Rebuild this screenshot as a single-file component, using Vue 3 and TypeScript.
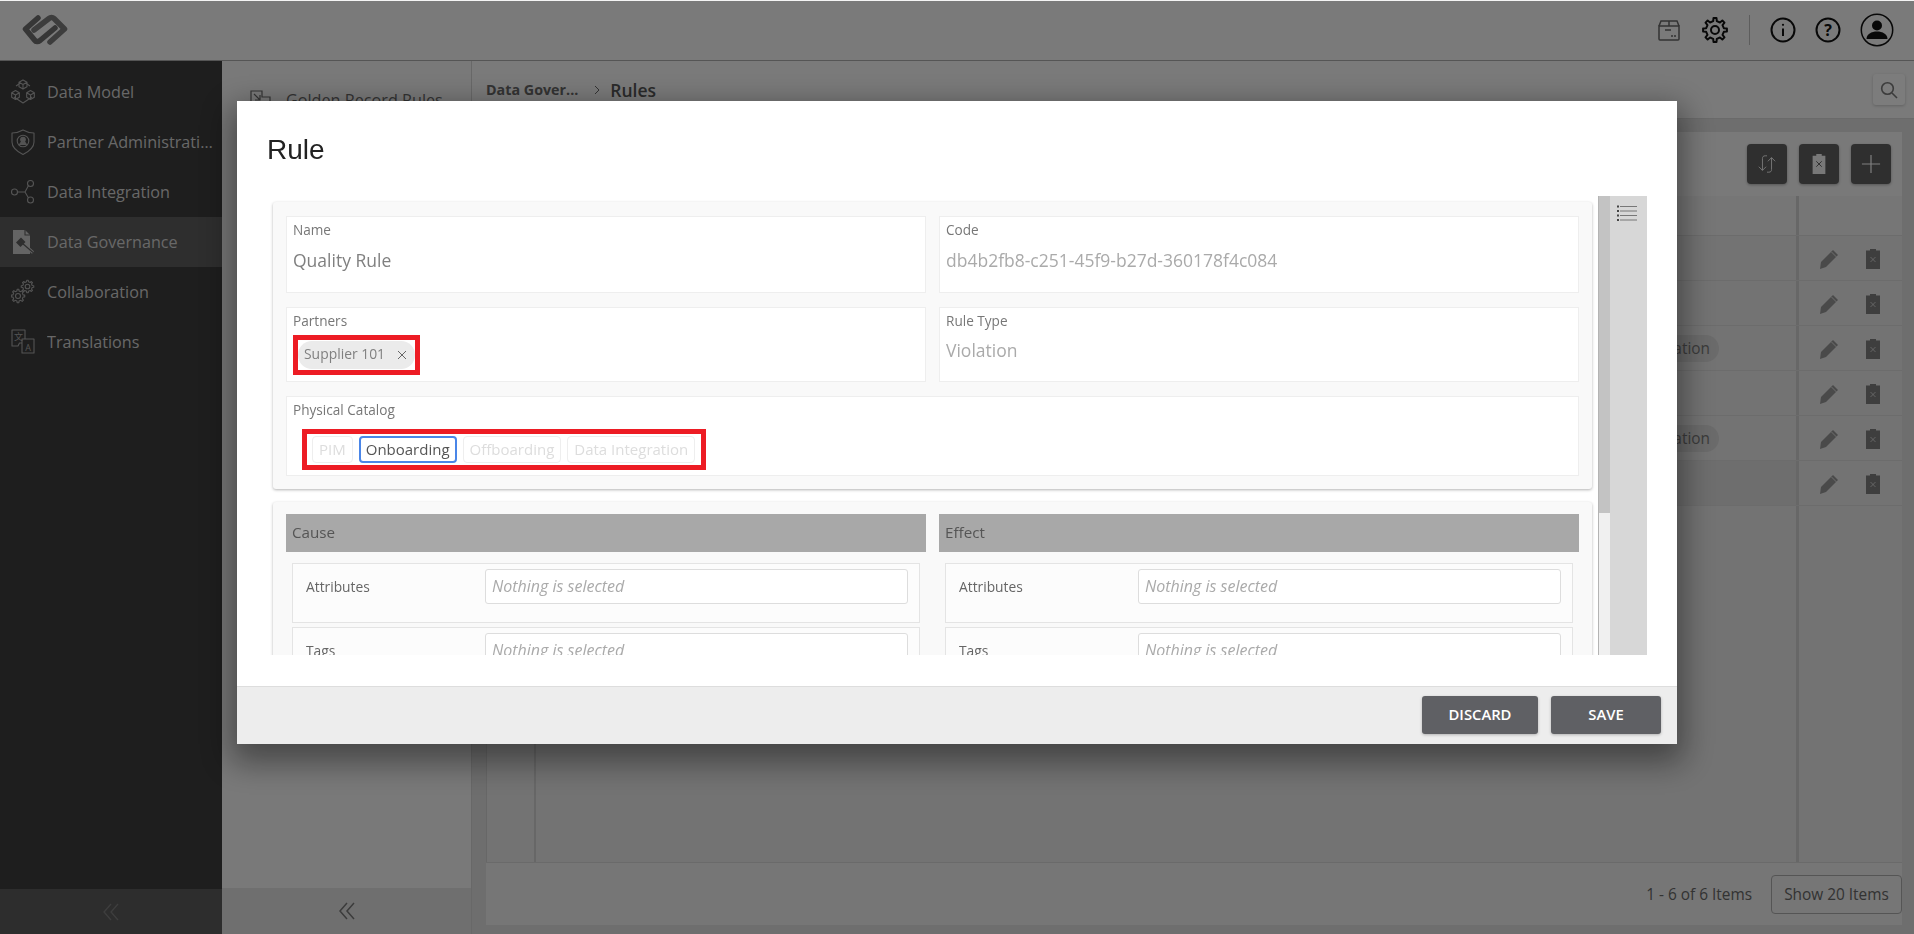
<template>
  <div class="page">
    <header class="topbar">
      <svg class="logo" viewBox="0 0 46 32" fill="none" stroke="#6c6c6c" stroke-width="5.500" stroke-linecap="round" stroke-linejoin="round">
        <path d="M16 4 3.500 15l9 11c1.500 2 3.500 2 5.500.500L33 14" />
        <path d="M12 16 27 4.500c1.500-1.500 3.500-1.500 5 0L42.500 15 28 28" stroke="#7a7a7a" />
      </svg>
      <div class="top-actions">
        <svg class="ic-box" viewBox="0 0 22 22" fill="none" stroke="#666" stroke-width="1.500">
          <path d="M1 7h20v13a1 1 0 0 1-1 1H2a1 1 0 0 1-1-1z" />
          <path d="M1 7l2-5h16l2 5M11 2v5M7 11h6M14 16v2M17 16v2" />
        </svg>
        <svg class="ic-gear" viewBox="0 0 26 26" fill="none" stroke="#111" stroke-width="2">
          <path :d="gearPath(13, 13, 12, 9, 8)" stroke-linejoin="round" />
          <circle cx="13" cy="13" r="4" />
        </svg>
        <span class="top-sep"></span>
        <svg class="ic-round" viewBox="0 0 26 26" fill="none" stroke="#111" stroke-width="2">
          <circle cx="13" cy="13" r="11.500" />
          <path d="M13 11.500V19" />
          <circle cx="13" cy="7.800" r="1.100" fill="#111" stroke="none" />
        </svg>
        <svg class="ic-round" viewBox="0 0 26 26" fill="none" stroke="#111" stroke-width="2">
          <circle cx="13" cy="13" r="11.500" />
          <text x="13" y="18.500" text-anchor="middle" class="q-mark">?</text>
        </svg>
        <svg class="ic-user" viewBox="0 0 34 34" fill="none">
          <circle cx="17" cy="17" r="15.700" stroke="#111" stroke-width="1.500" />
          <circle cx="17" cy="12.500" r="5" fill="#111" />
          <path d="M6.500 26c0-5 5-7.500 10.500-7.500S27.500 21 27.500 26z" fill="#111" />
        </svg>
      </div>
    </header>

    <div class="main">
      <aside class="sidebar">
        <nav class="nav">
          <a v-for="item in navItems" :key="item.label" class="nav-item" :class="{ active: item.active }">
            <svg class="nav-icon" viewBox="0 0 24 26" fill="none" stroke="#a8a8a8" stroke-width="1.100" stroke-linejoin="round">
              <template v-if="item.icon === 'cubes'">
                <path v-for="c in cubes" :key="c" :d="c" />
                <path d="M5 7 8 5M16 5l3 2M3 18l9 6 9-6" />
              </template>
              <template v-else-if="item.icon === 'shield'">
                <path d="M12 1C8.500 3 4.500 4 1 4v9c0 6 6 10 11 12.500C17 23 23 19 23 13V4c-3.500 0-7.500-1-11-3z" />
                <circle cx="12" cy="12" r="5.800" />
                <circle cx="12" cy="10.500" r="2.300" fill="#a8a8a8" />
                <path d="M8.500 16c.5-2 2-3 3.500-3s3 1 3.500 3" fill="#a8a8a8" />
              </template>
              <template v-else-if="item.icon === 'nodes'">
                <circle cx="3.500" cy="13" r="3" />
                <circle cx="19.500" cy="4.500" r="3" />
                <circle cx="19.500" cy="21" r="3" />
                <path d="M6.500 13H14l3.500-6.500M14 13l3.500 6" />
              </template>
              <template v-else-if="item.icon === 'gavel'">
                <path d="M2 1h12l5 5v19H2z" fill="#c8c8c8" stroke="none" />
                <path d="M14 1v5h5" stroke="#5c5c5c" />
                <path d="M11 14l11 9.500" stroke="#c8c8c8" stroke-width="3" />
                <path d="M11 14l11 9.500" stroke="#5c5c5c" stroke-width="1.200" />
                <path d="M5 13.500 10 8.500l4.500 4.500-5 5z" fill="#5c5c5c" stroke="none" />
              </template>
              <template v-else-if="item.icon === 'gears'">
                <path :d="gearPath(16.500, 7.500, 6.300, 4.800, 8)" />
                <circle cx="16.500" cy="7.500" r="2.300" />
                <path :d="gearPath(7, 17, 6.800, 5.200, 8)" />
                <circle cx="7" cy="17" r="2.500" />
              </template>
              <template v-else>
                <path d="M1 1h13v13H8.500l-1.500 3H1z" />
                <path d="M11 10h12v14H11z" fill="#3c3c3c" />
                <text x="7.500" y="11" text-anchor="middle" class="glyph-zh">文</text>
                <text x="17" y="21.500" text-anchor="middle" class="glyph-a">A</text>
              </template>
            </svg>
            <span class="nav-label">{{ item.label }}</span>
          </a>
        </nav>
        <div class="collapse dark">
          <svg viewBox="0 0 16 20" fill="none" stroke="#7c7c7c" stroke-width="1.300"><path d="M8 2 1 10l7 8M15 2l-7 8 7 8" /></svg>
        </div>
      </aside>

      <section class="subpanel">
        <div class="sub-list">
          <div class="sub-item">
            <svg viewBox="0 0 22 20" fill="none" stroke="#666" stroke-width="1.200">
              <path d="M1 1h11v6h8v11H1z" />
              <path d="M4 4l6 6M10 5v5H5" />
            </svg>
            <span>Golden Record Rules</span>
          </div>
        </div>
        <div class="collapse">
          <svg viewBox="0 0 16 20" fill="none" stroke="#777" stroke-width="1.500"><path d="M8 2 1 10l7 8M15 2l-7 8 7 8" /></svg>
        </div>
      </section>

      <section class="content">
        <div class="crumbs">
          <span class="crumb">Data Gover...</span>
          <svg class="crumb-sep" viewBox="0 0 8 12" fill="none" stroke="#666" stroke-width="1"><path d="M2 2l4 4-4 4" /></svg>
          <span class="crumb current">Rules</span>
          <button class="search-btn">
            <svg viewBox="0 0 18 18" fill="none" stroke="#777" stroke-width="1.600"><circle cx="7.500" cy="7.500" r="5.800" /><path d="M12 12l5 5" /></svg>
          </button>
        </div>
        <div class="workspace">
          <div class="toolbar">
            <button class="tool-btn">
              <svg viewBox="0 0 22 22" fill="none" stroke="#f4f4f4" stroke-width="1">
                <path d="M11 2H9c-2 0-3 1-3 3v13M2 14l4 4 4-4M11 20h2c2 0 3-1 3-3V4M12 8l4-4 4 4" />
              </svg>
            </button>
            <button class="tool-btn">
              <svg viewBox="0 0 16 22"><path d="M5 0h6v2h4v20H1V2h4z" fill="#f0f0f0" /><path d="M5 8l6 6M11 8l-6 6" stroke="#555" fill="none" /></svg>
            </button>
            <button class="tool-btn">
              <svg viewBox="0 0 22 22" fill="none" stroke="#fff" stroke-width="1.300"><path d="M11 1v20M1 11h20" /></svg>
            </button>
          </div>
          <div class="table">
            <div class="thead">
              <div class="col-check"></div>
              <div class="col-main"></div>
              <div class="col-actions"></div>
            </div>
            <div class="tbody">
              <div v-for="(row, i) in rows" :key="i" class="row" :class="{ selected: row.selected }">
                <div class="col-check"></div>
                <div class="col-main">
                  <span v-if="row.chip" class="row-chip">Translation</span>
                </div>
                <div class="col-actions">
                  <svg class="row-pencil" viewBox="0 0 20 20"><path d="M14 1l5 5L7 18l-6 2 1-7z" fill="#949494" /><path d="M12.500 3l5 5" stroke="#ddd" /></svg>
                  <svg class="row-trash" viewBox="0 0 14 20"><path d="M4 0h6v1.500h4V20H0V1.500h4z" fill="#7c7c7c" /><path d="M4.500 8l5 5M9.500 8l-5 5" stroke="#ddd" fill="none" stroke-width=".8" /></svg>
                </div>
              </div>
              <div class="row-rest">
                <div class="col-check"></div>
                <div class="col-main"></div>
                <div class="col-actions"></div>
              </div>
            </div>
          </div>
          <div class="pager">
            <span class="pager-count">1 - 6 of 6 Items</span>
            <button class="pager-btn">Show 20 Items</button>
          </div>
        </div>
      </section>
    </div>

    <div class="scrim"></div>

    <div class="modal">
      <h2 class="modal-title">Rule</h2>
      <div class="modal-body">
        <div class="form">
          <div class="card top-card">
            <div class="field name-field">
              <label>Name</label>
              <div class="value">Quality Rule</div>
            </div>
            <div class="field name-field">
              <label>Code</label>
              <div class="value muted">db4b2fb8-c251-45f9-b27d-360178f4c084</div>
            </div>
            <div class="field partner-field">
              <label>Partners</label>
              <div class="mark partner-mark">
                <span class="chip">Supplier 101
                  <svg viewBox="0 0 10 10" fill="none" stroke="#666"><path d="M1 1l8 8M9 1l-8 8" /></svg>
                </span>
              </div>
            </div>
            <div class="field partner-field">
              <label>Rule Type</label>
              <div class="value muted type-value">Violation</div>
            </div>
            <div class="field catalog-field">
              <label>Physical Catalog</label>
              <div class="mark catalog-mark">
                <button v-for="c in catalogs" :key="c" class="seg" :class="{ on: c === 'Onboarding' }">{{ c }}</button>
              </div>
            </div>
          </div>
          <div class="card bottom-card">
            <div v-for="side in ['Cause', 'Effect']" :key="side" class="side">
              <div class="side-head">{{ side }}</div>
              <div v-for="f in ['Attributes', 'Tags']" :key="f" class="pick-row">
                <span class="pick-label">{{ f }}</span>
                <div class="pick-input">Nothing is selected</div>
              </div>
            </div>
          </div>
        </div>
        <div class="scrollbar"><div class="thumb"></div></div>
        <div class="outline">
          <svg viewBox="0 0 20 17" fill="none" stroke="#777">
            <path d="M3 1.500h17M3 6h17M3 10.500h17M3 15h17" />
            <path d="M0 1.500h2M0 6h2M0 10.500h2M0 15h2" stroke="#444" stroke-width="2" />
          </svg>
        </div>
      </div>
      <footer class="modal-foot">
        <button class="foot-btn discard">DISCARD</button>
        <button class="foot-btn save">SAVE</button>
      </footer>
    </div>
  </div>
</template>

<script setup lang="ts">
interface NavItem {
  label: string
  icon: string
  active?: boolean
}

const navItems: NavItem[] = [
  { label: 'Data Model', icon: 'cubes' },
  { label: 'Partner Administration', icon: 'shield' },
  { label: 'Data Integration', icon: 'nodes' },
  { label: 'Data Governance', icon: 'gavel', active: true },
  { label: 'Collaboration', icon: 'gears' },
  { label: 'Translations', icon: 'translate' },
]

const rows = [
  { chip: false },
  { chip: false },
  { chip: true },
  { chip: false },
  { chip: true },
  { chip: false, selected: true },
]

const catalogs = ['PIM', 'Onboarding', 'Offboarding', 'Data Integration']

// small isometric cube, drawn around its centre
function cubePath(cx: number, cy: number, r: number) {
  const dx = r * 0.87
  const dy = r * 0.5
  return `M${cx} ${cy - r}L${cx + dx} ${cy - dy}V${cy + dy}L${cx} ${cy + r}L${cx - dx} ${cy + dy}V${cy - dy}Z` +
    `M${cx - dx} ${cy - dy}L${cx} ${cy}L${cx + dx} ${cy - dy}M${cx} ${cy}V${cy + r}`
}

const cubes = [cubePath(12, 5.5, 4.6), cubePath(4.5, 16, 4.4), cubePath(19.5, 16, 4.4)]

function gearPath(cx: number, cy: number, outer: number, inner: number, teeth: number) {
  const step = (Math.PI * 2) / teeth
  const pts: string[] = []
  for (let i = 0; i < teeth; i++) {
    const a = i * step
    const w = step * 0.16
    const corners: [number, number][] = [
      [inner, a - w * 1.6],
      [outer, a - w],
      [outer, a + w],
      [inner, a + w * 1.6],
    ]
    for (const [r, t] of corners) {
      pts.push(`${(cx + Math.sin(t) * r).toFixed(2)} ${(cy - Math.cos(t) * r).toFixed(2)}`)
    }
  }
  return 'M' + pts.join('L') + 'Z'
}
</script>

<style>
html, body { margin: 0; height: 100%; overflow: hidden; }
</style>

<style scoped>
.page {
  height: 100vh;
  display: flex;
  flex-direction: column;
  font-family: "Open Sans", "Noto Sans", sans-serif;
  background: #dcdcdc;
  color: #666;
  overflow: hidden;
}
button { font-family: inherit; }

.topbar {
  height: 61px;
  flex: none;
  box-sizing: border-box;
  display: flex;
  align-items: center;
  justify-content: space-between;
  padding: 0 20px 0 22px;
  background: #f4f4f4;
  border-bottom: 1px solid #aaa;
}
.logo { width: 46px; height: 32px; }
.top-actions { display: flex; align-items: center; }
.ic-box { width: 22px; height: 22px; margin-right: 22px; }
.ic-gear { width: 26px; height: 26px; margin-right: 21px; }
.top-sep { width: 1px; height: 30px; background: #bbb; margin-right: 20px; }
.ic-round { width: 26px; height: 26px; margin-right: 19px; }
.ic-user { width: 34px; height: 34px; }
.q-mark { font: 700 16px "Open Sans", sans-serif; fill: #111; stroke: none; }

.main { flex: 1; display: flex; min-height: 0; }

.sidebar {
  width: 222px;
  flex: none;
  display: flex;
  flex-direction: column;
  background: #3c3c3c;
}
.nav { flex: 1; padding-top: 6px; }
.nav-item {
  height: 50px;
  display: flex;
  align-items: center;
  gap: 12px;
  padding-left: 11px;
  color: #d0d0d0;
  font-size: 16.200px;
}
.nav-item.active { background: #5c5c5c; }
.nav-icon { width: 24px; height: 26px; flex: none; }
.nav-label {
  width: 166px;
  white-space: nowrap;
  overflow: hidden;
  text-overflow: ellipsis;
}
.glyph-zh { font: 9px "Noto Sans CJK SC", sans-serif; fill: #a8a8a8; stroke: none; }
.glyph-a { font: 9px "Open Sans", sans-serif; fill: #a8a8a8; stroke: none; }

.collapse {
  height: 46px;
  flex: none;
  display: flex;
  align-items: center;
  justify-content: center;
  background: #dfdfdf;
}
.collapse.dark { background: #5a5a5a; height: 45px; }
.collapse svg { width: 16px; height: 20px; }

.subpanel {
  width: 250px;
  flex: none;
  display: flex;
  flex-direction: column;
  background: #f2f2f2;
  border-right: 1px solid #d0d0d0;
  box-sizing: border-box;
}
.sub-list { flex: 1; padding: 28px 0 0 28px; }
.sub-item { display: flex; align-items: center; gap: 14px; font-size: 16.200px; color: #666; }
.sub-item svg { width: 22px; height: 20px; }

.content { flex: 1; min-width: 0; display: flex; flex-direction: column; }
.crumbs {
  height: 58px;
  flex: none;
  box-sizing: border-box;
  display: flex;
  align-items: center;
  padding: 0 9px 0 14px;
  background: #f4f4f4;
  border-bottom: 1px solid #d4d4d4;
}
.crumb { font-size: 14.300px; font-weight: 700; color: #666; }
.crumb.current { font-size: 17.500px; font-weight: 600; color: #555; }
.crumb-sep { width: 8px; height: 12px; margin: 0 9px 0 15px; }
.search-btn {
  width: 32px;
  height: 31px;
  margin-left: auto;
  padding: 6px;
  background: #f8f8f8;
  border: none;
  border-radius: 3px;
  box-shadow: 0 1px 3px rgba(0, 0, 0, 0.2);
  display: flex;
}
.search-btn svg { width: 18px; height: 18px; margin: auto; }

.workspace {
  flex: 1;
  min-height: 0;
  display: flex;
  flex-direction: column;
  padding: 13px 12px 9px 14px;
}
.toolbar {
  height: 64px;
  flex: none;
  display: flex;
  justify-content: flex-end;
  gap: 12px;
  padding: 12px 11px 0 0;
  box-sizing: border-box;
  background: #f3f3f3;
}
.tool-btn {
  width: 40px;
  height: 40px;
  padding: 0;
  background: #5e5e5e;
  border: none;
  border-radius: 4px;
  box-shadow: 0 1px 3px rgba(0, 0, 0, 0.3);
  display: flex;
  align-items: center;
  justify-content: center;
}
.tool-btn svg { width: 20px; height: 20px; }

.table { flex: 1; min-height: 0; display: flex; flex-direction: column; background: #e6e6e6; }
.thead { height: 39px; display: flex; flex: none; background: #ececec; }
.tbody { flex: 1; display: flex; flex-direction: column; min-height: 0; }
.row { height: 45px; flex: none; display: flex; box-sizing: border-box; border-top: 1px solid #d8d8d8; }
.row.selected { background: #dcdcdc; }
.row.selected .col-actions { background: #e6e6e6; }
.row-rest { flex: 1; display: flex; border-top: 1px solid #d8d8d8; }
.col-check { width: 50px; flex: none; border-left: 1px solid #cfcfcf; border-right: 2px solid #cfcfcf; box-sizing: border-box; }
.col-main {
  flex: 1;
  display: flex;
  align-items: center;
  justify-content: flex-end;
  padding-right: 77px;
  border-right: 3px solid #cfcfcf;
}
.col-actions {
  width: 103px;
  flex: none;
  box-sizing: border-box;
  display: flex;
  align-items: center;
  gap: 27px;
  padding: 1px 0 0 20px;
}
.row-pencil { width: 20px; height: 20px; }
.row-trash { width: 14px; height: 20px; }
.row-chip {
  height: 27px;
  line-height: 27px;
  padding: 0 9px 0 14px;
  border-radius: 14px;
  background: #d6d6d6;
  color: #777;
  font-size: 15.400px;
}

.pager {
  height: 63px;
  flex: none;
  box-sizing: border-box;
  display: flex;
  align-items: center;
  justify-content: flex-end;
  gap: 19px;
  background: #ececec;
  border-top: 1px solid #d4d4d4;
  font-size: 15.400px;
  color: #666;
}
.pager-btn {
  width: 131px;
  height: 39px;
  padding: 0;
  background: transparent;
  border: 1px solid #aaa;
  border-radius: 4px;
  font-size: 15.400px;
  color: #666;
}

.scrim {
  position: fixed;
  inset: 1px 0 0 0;
  background: rgba(0, 0, 0, 0.5);
}

.modal {
  position: fixed;
  left: 237px;
  top: 101px;
  width: 1440px;
  height: 643px;
  display: flex;
  flex-direction: column;
  background: #fff;
  box-shadow: 0 12px 30px 6px rgba(0, 0, 0, 0.42);
}
.modal-title {
  height: 95px;
  flex: none;
  margin: 0;
  padding: 33px 0 0 30px;
  box-sizing: border-box;
  font: 400 28px "Liberation Sans", Arial, sans-serif;
  color: #222;
}
.modal-body {
  height: 459px;
  flex: none;
  margin: 0 30px;
  display: flex;
  overflow: hidden;
}
.form { flex: 1; min-width: 0; padding: 6px 6px 0 6px; overflow: hidden; }
.card {
  background: #f9f9f9;
  border-radius: 3px;
  box-shadow: 0 1px 3px rgba(0, 0, 0, 0.3);
  box-sizing: border-box;
  display: grid;
  grid-template-columns: 1fr 1fr;
  column-gap: 13px;
}
.top-card { padding: 14px 13px 13px; row-gap: 14px; height: 287px; }
.field {
  background: #fff;
  border: 1px solid #eee;
  padding: 4px 6px;
  box-sizing: border-box;
}
.field label { display: block; font-size: 13.600px; line-height: 18px; color: #777; }
.name-field { height: 77px; }
.partner-field { height: 75px; }
.catalog-field { grid-column: 1 / 3; height: 80px; }
.value { margin-top: 9px; font-size: 17.500px; line-height: 24px; color: #808080; }
.value.muted { color: #aaa; }
.type-value { margin-top: 8px; }
.mark { border: 5px solid #ed1c24; box-sizing: border-box; display: flex; align-items: center; }
.partner-mark { width: 127px; height: 40px; margin: 5px 0 0; }
.chip {
  width: 117px;
  height: 28px;
  box-sizing: border-box;
  padding: 0 8px 3px 6px;
  display: flex;
  align-items: center;
  justify-content: space-between;
  background: #ebebeb;
  border-radius: 14px;
  font-size: 13.900px;
  color: #808080;
}
.chip svg { width: 10px; height: 10px; margin-top: 3px; }
.catalog-mark { height: 41px; width: 404px; margin: 10px 0 0 9px; padding-left: 5px; gap: 6px; }
.seg {
  height: 27px;
  flex: none;
  padding: 0 6px 1px;
  white-space: nowrap;
  background: #fff;
  border: 1px solid #eee;
  border-radius: 4px;
  font-size: 15px;
  color: #ddd;
}
.seg.on { border: 2px solid #4a86e8; color: #555; padding: 0 5px 1px; }
.bottom-card { margin-top: 13px; padding: 12px 13px 0; height: 300px; }
.side-head {
  height: 38px;
  line-height: 36px;
  padding-left: 6px;
  background: #a8a8a8;
  font-size: 15.200px;
  color: #555;
}
.pick-row {
  margin: 0 6px 4px;
  height: 60px;
  box-sizing: border-box;
  padding: 5px 11px 0 13px;
  background: #fcfcfc;
  border: 1px solid #e4e4e4;
  display: flex;
  font-size: 13.800px;
  color: #666;
}
.side-head + .pick-row { margin-top: 11px; }
.pick-label { width: 179px; flex: none; padding-top: 8px; }
.pick-input {
  flex: 1;
  height: 35px;
  line-height: 33px;
  box-sizing: border-box;
  padding-left: 6px;
  background: #fff;
  border: 1px solid #ddd;
  border-radius: 3px;
  font-size: 16px;
  font-style: italic;
  color: #aaa;
}
.scrollbar { width: 12px; flex: none; background: #f0f0f0; border-left: 1px solid #b4b4b4; box-sizing: border-box; }
.thumb { height: 317px; background: #c3c3c3; }
.outline { width: 37px; flex: none; background: #d7d7d7; padding: 9px 0 0 7px; box-sizing: border-box; }
.outline svg { width: 20px; height: 17px; display: block; }
.modal-foot {
  height: 58px;
  flex: none;
  margin-top: 31px;
  box-sizing: border-box;
  display: flex;
  justify-content: flex-end;
  gap: 13px;
  padding: 9px 16px 0 0;
  background: #ededed;
  border-top: 1px solid #ddd;
}
.foot-btn {
  height: 38px;
  padding: 0 0 2px;
  border: none;
  border-radius: 3px;
  background: #5f6064;
  color: #fff;
  font-size: 14.800px;
  font-weight: 600;
  box-shadow: 0 1px 3px rgba(0, 0, 0, 0.25);
}
.foot-btn.discard { width: 116px; }
.foot-btn.save { width: 110px; }
</style>
